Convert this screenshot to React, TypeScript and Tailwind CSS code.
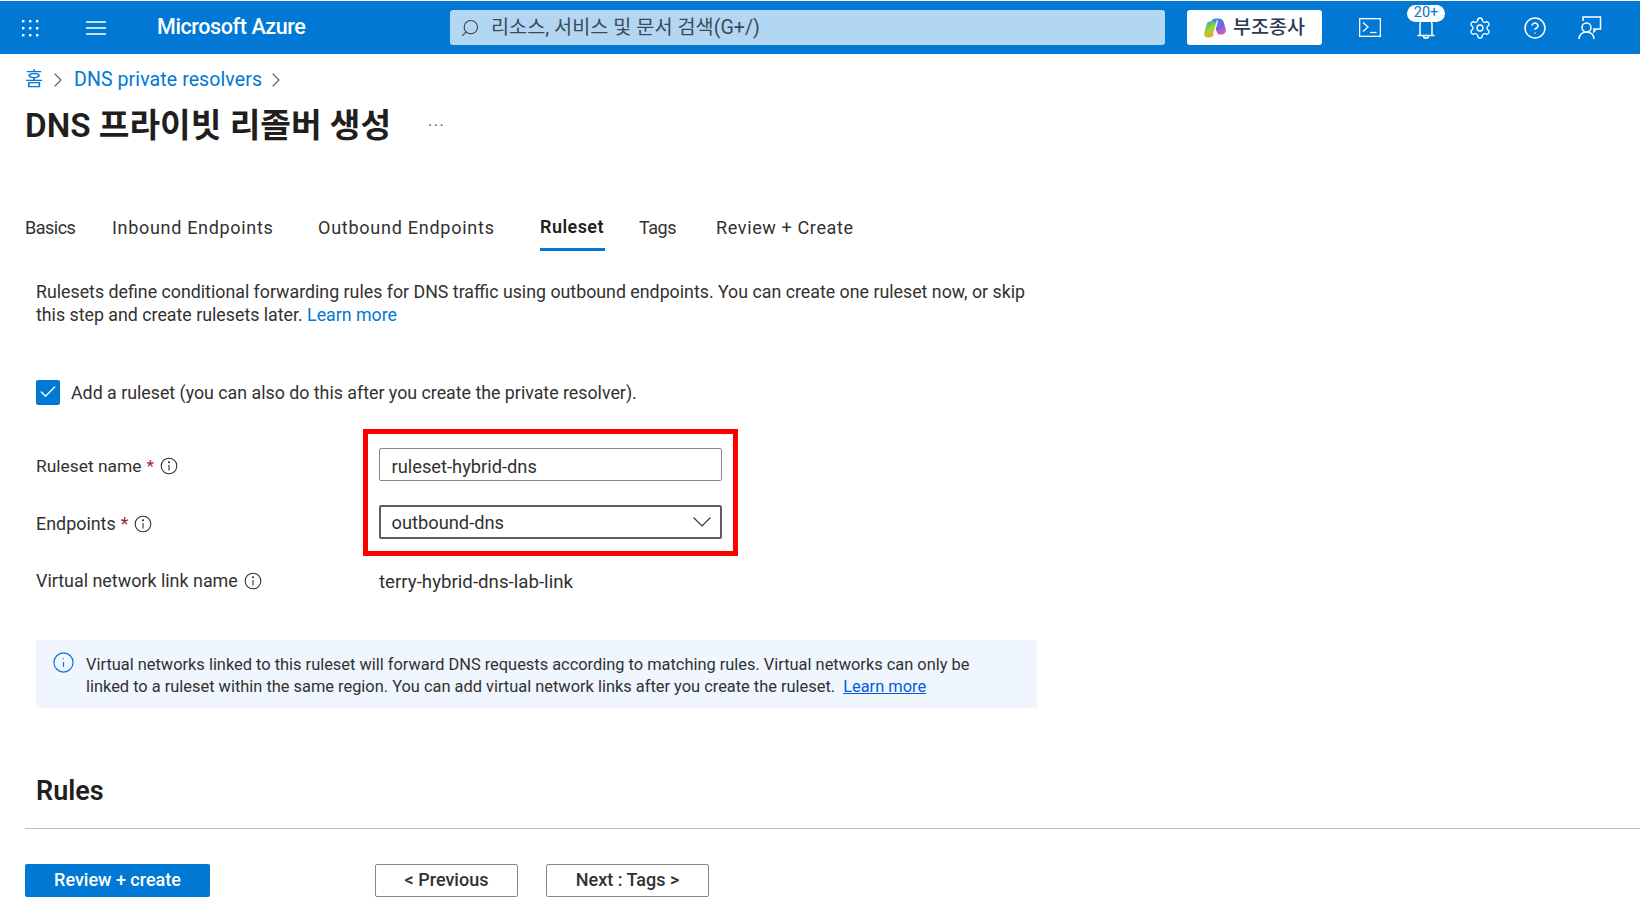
import React from 'react';
import { ChevronRight, Check, Search, Info, Settings, CircleHelp } from 'lucide-react';

const FONT = 'font-["Roboto","Noto_Sans_CJK_KR",sans-serif]';

function Waffle() {
  const dots = [];
  for (let y = 0; y < 3; y++) {
    for (let x = 0; x < 3; x++) {
      dots.push(<rect key={`${x}-${y}`} x={1 + x * 7} y={1 + y * 7} width="2.4" height="2.4" fill="white" />);
    }
  }
  return (
    <svg width="18" height="18" viewBox="0 0 18 18">
      {dots}
    </svg>
  );
}

function Hamburger() {
  return (
    <svg width="20" height="14" viewBox="0 0 20 14" stroke="white" strokeWidth="1.3">
      <path d="M0 1h20M0 7h20M0 13h20" />
    </svg>
  );
}

function CopilotLogo() {
  return (
    <svg width="22" height="20" viewBox="0 0 22 20">
      <defs>
        <linearGradient id="cpA" x1="0.2" y1="0" x2="0.8" y2="1">
          <stop offset="0" stopColor="#1f9cf0" />
          <stop offset="0.55" stopColor="#7a5ce8" />
          <stop offset="1" stopColor="#e05fa8" />
        </linearGradient>
        <linearGradient id="cpB" x1="0.2" y1="0" x2="0.7" y2="1">
          <stop offset="0" stopColor="#27b98a" />
          <stop offset="0.5" stopColor="#a6cf3c" />
          <stop offset="1" stopColor="#f5a623" />
        </linearGradient>
      </defs>
      <path d="M7 3.500C8 1.500 9.500.5 11.500.5h3c3 0 4.500 1.500 5.300 4l1.900 6.500c.9 3.200-1 5.500-4 5.500h-3.200l-1-1.500z" fill="url(#cpA)" />
      <path d="M5.500 3.500h4.500c2 0 3 1.500 2.500 3.500l-2 8c-.7 2.800-2.400 4.500-5 4.500h-1.500C1.200 19.500-.5 17.200.4 14.200l2-7.200c.5-2 1.500-3.500 3.100-3.500z" fill="url(#cpB)" />
      <path d="M13.500 2.500 9.600 16.500" stroke="white" strokeWidth="1.200" fill="none" />
    </svg>
  );
}

function TerminalIcon() {
  return (
    <svg width="22" height="19" viewBox="0 0 22 19" fill="none" stroke="white" strokeWidth="1.300">
      <rect x="0.65" y="0.65" width="20.7" height="17.7" />
      <path d="M4 4.500l5 4.500-5 4.500" />
      <path d="M11 14.500h6.500" />
    </svg>
  );
}

function BellIcon() {
  return (
    <svg width="22" height="24" viewBox="0 0 22 24" fill="none" stroke="white" strokeWidth="1.500">
      <path d="M5 19V8a6 6 0 0 1 12 0v11" />
      <path d="M2.500 19.500h17" />
      <path d="M8.500 20c0 2.800 5 2.800 5 0" />
    </svg>
  );
}

function FeedbackIcon() {
  return (
    <svg width="24" height="24" viewBox="0 0 24 24" fill="none" stroke="white" strokeWidth="1.500">
      <path d="M5 5V1h17.500v12H18l-2 2.500V12" />
      <circle cx="8.500" cy="11.500" r="4.500" />
      <path d="M1 23c.5-4.500 3.500-7 7.500-7s7 2.500 7.500 7" />
    </svg>
  );
}

function SelectChevron() {
  return (
    <svg width="18" height="10" viewBox="0 0 18 10" fill="none" stroke="#323130" strokeWidth="1.100">
      <path d="M.5.5 9 9 17.500.5" />
    </svg>
  );
}

function InfoDot({ className }: { className: string }) {
  return (
    <svg className={className} width="18" height="18" viewBox="0 0 18 18" fill="none" stroke="#323130" strokeWidth="1.100">
      <circle cx="9" cy="9" r="7.800" />
      <path d="M9 8v5.500" />
      <circle cx="9" cy="5.300" r="0.500" fill="#323130" />
    </svg>
  );
}

export default function App() {
  return (
    <div className={`h-[918px] w-[1640px] overflow-hidden bg-white text-[17.8px] text-[#323130] ${FONT}`}>
      <div className="h-px bg-white" />
      <header className="flex h-[53px] items-center bg-[#0078d4] text-white">
        <div className="ml-[21px] w-[65px]">
          <Waffle />
        </div>
        <Hamburger />
        <div className="ml-[51px] w-[293px] text-[21.5px] font-medium tracking-[-0.4px]">Microsoft Azure</div>
        <div className="flex h-[35px] w-[715px] items-center rounded-[3px] bg-[#b3d7f3] pl-[10px] text-[19.7px] text-[#3b4a58]">
          <Search className="h-[20px] w-[20px] -scale-x-100" strokeWidth={1.4} />
          <span className="ml-[11px]">리소스, 서비스 및 문서 검색(G+/)</span>
        </div>
        <div className="ml-[22px] flex h-[35px] w-[135px] items-center justify-center gap-[7px] rounded-[3px] bg-white text-[19.5px] font-medium text-[#2b3a55]">
          <CopilotLogo />
          <span>부조종사</span>
        </div>
        <div className="ml-[37px] flex w-[22px] justify-center">
          <TerminalIcon />
        </div>
        <div className="relative ml-[33px] flex w-[24px] justify-center">
          <BellIcon />
          <span className="absolute left-[-7px] top-[-11px] flex h-[17px] w-[38px] items-center justify-center rounded-full bg-white text-[14.5px] text-[#0078d4]">
            20+
          </span>
        </div>
        <div className="ml-[30px] flex w-[24px] justify-center">
          <Settings className="h-[24px] w-[24px]" strokeWidth={1.3} />
        </div>
        <div className="ml-[31px] flex w-[24px] justify-center">
          <CircleHelp className="h-[24px] w-[24px]" strokeWidth={1.5} />
        </div>
        <div className="ml-[31px] flex w-[24px] justify-center">
          <FeedbackIcon />
        </div>
      </header>

      <nav className="ml-[25px] mt-[13px] flex h-[26px] items-center text-[19.5px] tracking-[0.1px] text-[#0078d4]">
        <span>홈</span>
        <ChevronRight className="ml-[3px] mr-[4px] h-[24px] w-[24px] text-[#605e5c]" strokeWidth={1.1} />
        <span>DNS private resolvers</span>
        <ChevronRight className="ml-[2px] h-[24px] w-[24px] text-[#605e5c]" strokeWidth={1.1} />
      </nav>

      <div className="ml-[25px] mt-[11px] flex h-[44px] items-center">
        <h1 className="text-[33.3px] font-semibold text-[#201f1e]">DNS 프라이빗 리졸버 생성</h1>
        <span className="ml-[37px] -mt-[10px] text-[16px] tracking-[1.5px] text-[#605e5c]">...</span>
      </div>

      <div className="ml-[25px] mt-[55px] flex h-[45px] items-start pt-[11px] text-[18px]">
        <span className="w-[87px] tracking-[-0.5px]">Basics</span>
        <span className="w-[206px] tracking-[0.68px]">Inbound Endpoints</span>
        <span className="w-[222px] tracking-[0.75px]">Outbound Endpoints</span>
        <span className="relative -mt-px w-[99px] font-semibold tracking-[0.45px] text-[#201f1e]">
          Ruleset
          <span className="absolute left-0 top-[35px] h-[3px] w-[65px] bg-[#0078d4]" />
        </span>
        <span className="w-[77px] tracking-[-0.5px]">Tags</span>
        <span className="tracking-[0.63px]">Review + Create</span>
      </div>

      <p className="ml-[36px] mt-[32px] w-[1010px] leading-[23px]">
        Rulesets define conditional forwarding rules for DNS traffic using outbound endpoints. You can create one ruleset now, or skip this step and create rulesets later. <span className="text-[#0078d4]">Learn more</span>
      </p>

      <div className="ml-[36px] mt-[53px] flex h-[26px] items-center">
        <div className="flex h-[25px] w-[24px] items-center justify-center rounded-[2px] bg-[#0078d4]">
          <Check className="h-[20px] w-[20px] text-white" strokeWidth={1.6} />
        </div>
        <span className="ml-[11px] mt-[2px]">Add a ruleset (you can also do this after you create the private resolver).</span>
      </div>

      <div className="ml-[36px] mt-[24px] flex">
        <div className="flex w-[327px] flex-col pt-[20px] text-[17.4px]">
          <div className="flex h-[34px] items-center">
            Ruleset name <span className="ml-[5px] text-[#a4262c]">*</span>
            <InfoDot className="ml-[6px]" />
          </div>
          <div className="mt-[24px] flex h-[34px] items-center text-[17.9px]">
            Endpoints <span className="ml-[5px] text-[#a4262c]">*</span>
            <InfoDot className="ml-[6px]" />
          </div>
          <div className="mt-[23px] flex h-[34px] items-center text-[17.9px]">
            Virtual network link name
            <InfoDot className="ml-[6px]" />
          </div>
        </div>
        <div className="flex flex-col text-[18.3px]">
          <div className="h-[127px] w-[375px] border-[5px] border-[#fe0000] px-[11px] pt-[14px]">
            <div className="flex h-[33px] items-center rounded-[2px] border border-[#8a8886] px-[11.5px] pt-[4px]">ruleset-hybrid-dns</div>
            <div className="mt-[24px] flex h-[34px] items-center justify-between rounded-[2px] border-2 border-[#605e5c] pl-[10.5px] pr-[9px]">
              <span className="mt-[1px]">outbound-dns</span>
              <SelectChevron />
            </div>
          </div>
          <div className="ml-[16px] mt-[9px] flex h-[34px] items-center text-[18.7px]">terry-hybrid-dns-lab-link</div>
        </div>
      </div>

      <div className="ml-[36px] mt-[41px] flex h-[68px] w-[1001px] bg-[#eff6fe] text-[16.4px] leading-[22px]">
        <Info className="ml-[16px] mt-[11px] h-[23px] w-[23px] text-[#0f6cdd]" strokeWidth={1.2} />
        <p className="ml-[11px] mt-[14px] w-[890px]">
          Virtual networks linked to this ruleset will forward DNS requests according to matching rules. Virtual networks can only be linked to a ruleset within the same region. You can add virtual network links after you create the ruleset. <span className="ml-[4px] text-[#015cda] underline">Learn more</span>
        </p>
      </div>

      <h2 className="ml-[36px] mt-[63px] h-[40px] text-[27px] font-semibold leading-[40px] text-[#201f1e]">Rules</h2>

      <div className="ml-[25px] mt-[17px] h-px bg-[#bdbdbd]" />

      <div className="ml-[25px] mt-[35px] flex text-[18px]">
        <button className="h-[33px] w-[185px] rounded-[2px] bg-[#0078d4] pb-[2px] font-medium text-white">Review + create</button>
        <button className="ml-[165px] h-[33px] w-[143px] rounded-[2px] border border-[#8a8886] pb-[2px] font-medium">&lt; Previous</button>
        <button className="ml-[28px] h-[33px] w-[163px] rounded-[2px] border border-[#8a8886] pb-[2px] font-medium">Next : Tags &gt;</button>
      </div>
    </div>
  );
}
